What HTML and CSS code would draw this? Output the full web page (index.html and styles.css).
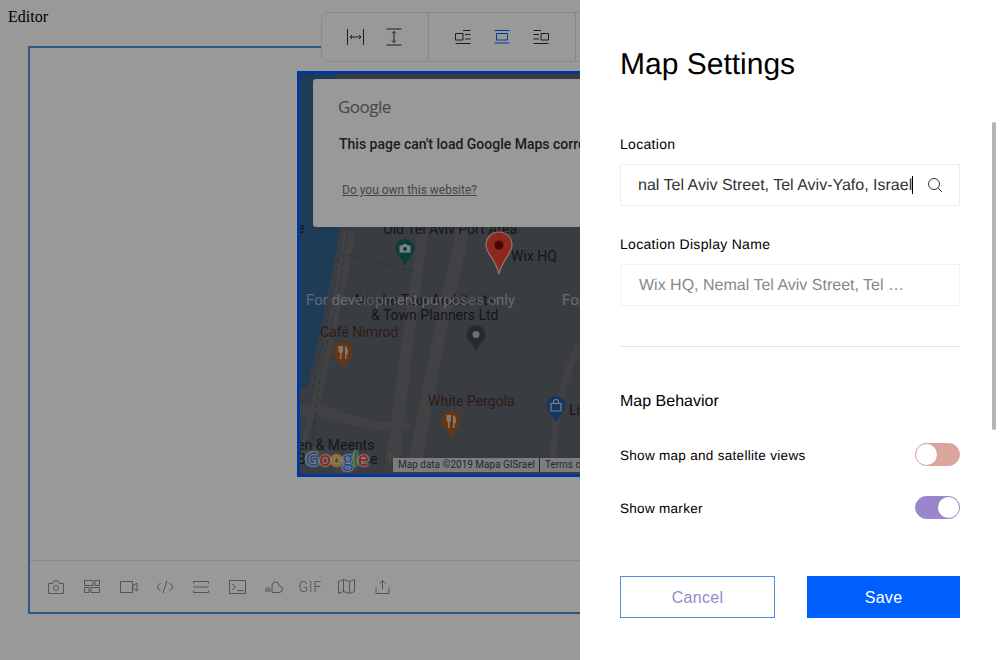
FILE: index.html
```html
<!DOCTYPE html>
<html lang="en">

<head>
    <meta charset="UTF-8">
    <title>Map Settings</title>
    <link rel="stylesheet" href="styles.css">
</head>

<body>
    <div>Editor</div>

    <div class="frame">
        <div class="canvas">
            <div class="map">
                <svg class="map-bg" width="600" height="400" viewBox="0 0 600 400">
                    <path class="sea" d="M0 0H36L40 156 26 230 8 312 0 316Z" />
                    <path class="road" d="M44 156 34 220 14 320 0 372V386L22 320 44 220 56 156Z" />
                    <path class="road" d="M118 156 100 280 86 386H100L112 280 128 156Z" />
                    <path class="road" d="M156 156 134 260 108 386H122L146 260 170 156Z" />
                    <path class="road" d="M0 332Q22 326 40 338L78 348H110V356H76L36 348Q20 340 0 342Z" />
                    <path class="road" d="M0 380Q22 362 40 384L44 400H36Q24 372 0 392Z" />
                    <path class="road" d="M276 270Q252 316 250 386H256Q258 318 282 276Z" />
                    <path class="path" d="M48 156 38 220 20 300 12 372" />
                    <path class="path" d="M40 178 116 198" />
                    <path class="arrow" d="M90 392V380M86 384l4-5 4 5" />
                </svg>

                <span class="label bit-1">e</span>
                <span class="label bit-2">Old Tel Aviv Port Area</span>
                <span class="label wix">Wix HQ</span>
                <span class="label planners-1">Moshe Tzur Architects</span>
                <span class="label planners-2">&amp; Town Planners Ltd</span>
                <span class="label brown nimrod">Café Nimrod</span>
                <span class="label brown pergola">White Pergola</span>
                <span class="label meents-1">en &amp; Meents</span>
                <span class="label meents-2">B e</span>
                <span class="label lig">Lig</span>
                <span class="watermark dev-1">For development purposes only</span>
                <span class="watermark dev-2">For development purposes only</span>

                <svg class="pin pin-camera" width="20" height="27" viewBox="0 0 20 27">
                    <path d="M10 0a9.500 9.500 0 0 1 9.500 9.500c0 6-6.500 9-9.500 17.500C7 18.500.5 15.500.5 9.500A9.500 9.500 0 0 1 10 0Z" fill="#12665f" />
                    <path d="M4.500 6.500h3l1-1.500h3l1 1.500h3v7h-11Z" fill="#d8d8d8" />
                    <circle cx="10" cy="10" r="2" fill="#12665f" />
                </svg>
                <svg class="pin pin-grey" width="20" height="27" viewBox="0 0 20 27">
                    <path d="M10 0a9.500 9.500 0 0 1 9.500 9.500c0 6-6.500 9-9.500 17.500C7 18.500.5 15.500.5 9.500A9.500 9.500 0 0 1 10 0Z" fill="#3e4a52" />
                    <circle cx="10" cy="9.500" r="3.500" fill="#b8bcc0" />
                </svg>
                <svg class="pin pin-food-1" width="20" height="27" viewBox="0 0 20 27">
                    <path d="M10 0a9.500 9.500 0 0 1 9.500 9.500c0 6-6.500 9-9.500 17.500C7 18.500.5 15.500.5 9.500A9.500 9.500 0 0 1 10 0Z" fill="#b05a20" />
                    <path d="M5.500 4v5q0 1.500 1.500 2v6h1.500v-6q1.500-.5 1.500-2V4M12 17V4q3 1 3 6v2h-1.500v5Z" fill="#dccabc" />
                </svg>
                <svg class="pin pin-food-2" width="20" height="27" viewBox="0 0 20 27">
                    <path d="M10 0a9.500 9.500 0 0 1 9.500 9.500c0 6-6.500 9-9.500 17.500C7 18.500.5 15.500.5 9.500A9.500 9.500 0 0 1 10 0Z" fill="#b05a20" />
                    <path d="M5.500 4v5q0 1.500 1.500 2v6h1.500v-6q1.500-.5 1.500-2V4M12 17V4q3 1 3 6v2h-1.500v5Z" fill="#dccabc" />
                </svg>
                <svg class="pin pin-shop" width="20" height="27" viewBox="0 0 20 27">
                    <path d="M10 0a9.500 9.500 0 0 1 9.500 9.500c0 6-6.500 9-9.500 17.500C7 18.500.5 15.500.5 9.500A9.500 9.500 0 0 1 10 0Z" fill="#2459a8" />
                    <path d="M5 7.500h10V15H5ZM7.500 7.500V6a2.500 2.500 0 0 1 5 0v1.500" fill="none" stroke="#d8d8d8" stroke-width="1.200" />
                </svg>

                <svg class="marker" width="28" height="44" viewBox="0 0 28 44">
                    <path d="M14 1C6.500 1 1 6.800 1 14c0 9 9.500 13.500 13 29 3.500-15.500 13-20 13-29C27 6.800 21.500 1 14 1Z" fill="#ea4335" stroke="#f2c4bc" stroke-width="1.200" />
                    <circle cx="14" cy="14" r="4.500" fill="#7a0c08" />
                </svg>

                <span class="map-logo"><i class="c-blue">G</i><i class="c-red">o</i><i class="c-yellow">o</i><i class="c-blue">g</i><i class="c-green">l</i><i class="c-red">e</i></span>

                <div class="attribution">
                    <span>Map data ©2019 Mapa GISrael</span>
                    <span class="terms">Terms of Use</span>
                </div>

                <div class="map-error">
                    <div class="error-logo">Google</div>
                    <p class="error-title">This page can't load Google Maps correctly.</p>
                    <a class="error-link">Do you own this website?</a>
                </div>
            </div>
        </div>

        <div class="bottom-bar">
            <span class="bar-item camera">
                <svg width="16" height="14" viewBox="0 0 16 14"><path d="M.5 3.500h4l1-2.500h5l1 2.500h4v10H.5Z" /><circle cx="8" cy="8" r="2.500" /></svg>
            </span>
            <span class="bar-item">
                <svg width="16" height="13" viewBox="0 0 16 13"><path d="M.5.500h8.500v5H.5ZM11 .5h4.500v5H11ZM.5 7.500H5v5H.5ZM7 7.500h8.500v5H7Z" /></svg>
            </span>
            <span class="bar-item">
                <svg width="18" height="12" viewBox="0 0 18 12"><path d="M.5.500h12v11H.5ZM12.500 5l4.500-3v8l-4.500-3" /></svg>
            </span>
            <span class="bar-item">
                <svg width="18" height="14" viewBox="0 0 18 14"><path d="M4.500 3 1 7l3.500 4M13.500 3 17 7l-3.500 4M11 1 7 13" /></svg>
            </span>
            <span class="bar-item">
                <svg width="16" height="12" viewBox="0 0 16 12"><path d="M.5 2.500V.5h15v2M.5 9.500v2h15v-2M.5 6h15" /></svg>
            </span>
            <span class="bar-item">
                <svg width="17" height="14" viewBox="0 0 17 14"><path d="M.5.500h16v13H.5ZM3 4l3.500 3L3 10M8 10.500h6.500" /></svg>
            </span>
            <span class="bar-item">
                <svg width="18" height="12" viewBox="0 0 18 12"><path d="M1 7v4M3 5.500V11M5 7v4M7 11V4Q8 1 10.500 1 14 1 14.500 5q3 .3 3 3T14.500 11.500H7" /></svg>
            </span>
            <span class="bar-item gif">GIF</span>
            <span class="bar-item">
                <svg width="17" height="15" viewBox="0 0 17 15"><path d="M.5 2.500 5.500.5l6 2 5-2v12l-5 2-6-2-5 2ZM5.500.5v12M11.500 2.500v12" /></svg>
            </span>
            <span class="bar-item">
                <svg width="15" height="14" viewBox="0 0 15 14"><path d="M7.500 9.500V1M4.500 3.500l3-3 3 3M1 7.500v6h13v-6" /></svg>
            </span>
        </div>

        <div class="toolbar">
            <div class="tool-group">
                <span class="tool">
                    <svg width="20" height="18" viewBox="0 0 20 18"><path d="M2.500 1v16M18.500 1v16M5 9h11M7 7 5 9l2 2M14 7l2 2-2 2" /></svg>
                </span>
                <span class="tool">
                    <svg width="16" height="18" viewBox="0 0 16 18"><path d="M.5 1h15M.5 17h15M8 3.500v11M6 5.500l2-2 2 2M6 12.500l2 2 2-2" /></svg>
                </span>
            </div>
            <div class="tool-group group-wrap">
                <span class="tool">
                    <svg width="16" height="14" viewBox="0 0 16 14"><path d="M.5 3.500h7.500v6.500H.5ZM8 .5h7.500M10 4.500h5.500M10 9h5.500M.5 13.500h15" /></svg>
                </span>
                <span class="tool tool-active">
                    <svg width="16" height="14" viewBox="0 0 16 14"><path d="M.5.5h15M.5 13h15M2.500 3.500h11V10h-11Z" /></svg>
                </span>
                <span class="tool">
                    <svg width="16" height="14" viewBox="0 0 16 14"><path d="M8 3.500h7.500v6.500H8ZM.5.5H8M.5 4.500H6M.5 9H6M.5 13.500h15" /></svg>
                </span>
            </div>
            <div class="tool-group group-rest"></div>
        </div>
    </div>

    <div class="overlay"></div>

    <aside class="panel">
        <h1>Map Settings</h1>

        <label class="field-label">Location</label>
        <div class="field">
            <span class="field-text">nal Tel Aviv Street, Tel Aviv-Yafo, Israel</span>
            <span class="caret"></span>
            <svg class="search" width="16" height="16" viewBox="0 0 16 16"><circle cx="7" cy="7" r="5.500" /><path d="m11 11 4 4" /></svg>
        </div>

        <label class="field-label second">Location Display Name</label>
        <div class="field field-name">
            <span class="field-text">Wix HQ, Nemal Tel Aviv Street, Tel …</span>
        </div>

        <hr>

        <h2>Map Behavior</h2>

        <div class="toggle-row">
            <span class="toggle-text">Show map and satellite views</span>
            <span class="toggle toggle-off"></span>
        </div>
        <div class="toggle-row">
            <span class="toggle-text">Show marker</span>
            <span class="toggle toggle-on"></span>
        </div>

        <div class="actions">
            <button class="btn-cancel">Cancel</button>
            <button class="btn-save">Save</button>
        </div>

        <div class="scroll-thumb"></div>
    </aside>
</body>

</html>
```

FILE: styles.css
```css
html,
body {
    height: 100%;
    overflow: hidden;
}

body {
    background-color: #fff;
}

.frame {
    position: relative;
    display: flex;
    flex-direction: column;
    width: 900px;
    height: 568px;
    margin: 20px 0 0 20px;
    box-sizing: border-box;
    border: 2px solid #4a94d8;
}

.canvas {
    flex: 1;
    padding: 23px 0 0 267px;
}

/* map */

.map {
    position: relative;
    width: 600px;
    height: 400px;
    border: 3px solid #0060ff;
    overflow: hidden;
    background-color: #60666f;
    font-family: Roboto, "Liberation Sans", sans-serif;
}

.map-bg {
    display: block;
}

.sea {
    fill: #32648e;
}

.road {
    fill: #6e6e72;
}

.path {
    fill: none;
    stroke: #3f5a5c;
    stroke-width: 1;
    stroke-dasharray: 5 3;
}

.arrow {
    fill: none;
    stroke: #7c7c7c;
    stroke-width: 1.500;
}

.label {
    position: absolute;
    font-size: 14px;
    line-height: 16px;
    white-space: nowrap;
    color: #23262c;
}

.brown {
    color: #4a3028;
}

.bit-1 { left: -3px; top: 146px; }
.bit-2 { left: 83px; top: 147px; }
.wix { left: 211px; top: 174px; }
.planners-1 { left: 55px; top: 218px; }
.planners-2 { left: 71px; top: 233px; }
.nimrod { left: 20px; top: 250px; }
.pergola { left: 128px; top: 319px; }
.meents-1 { left: -3px; top: 363px; }
.meents-2 { left: -3px; top: 377px; word-spacing: 61px; }
.lig { left: 269px; top: 328px; }

.watermark {
    position: absolute;
    top: 217px;
    font-size: 15px;
    line-height: 18px;
    white-space: nowrap;
    color: rgba(255, 255, 255, 0.5);
}

.dev-1 { left: 6px; }
.dev-2 { left: 262px; }

.pin {
    position: absolute;
}

.pin-camera { left: 95px; top: 165px; }
.pin-grey { left: 166px; top: 251px; }
.pin-food-1 { left: 33px; top: 268px; }
.pin-food-2 { left: 141px; top: 337px; }
.pin-shop { left: 246px; top: 322px; }

.marker {
    position: absolute;
    left: 185px;
    top: 157px;
}

.map-logo {
    position: absolute;
    left: 5px;
    top: 372px;
    font-family: "Open Sans", "Liberation Sans", sans-serif;
    font-size: 20px;
    line-height: 26px;
    font-weight: 600;
    letter-spacing: -0.6px;
    text-shadow: 0 0 2px #fff, 0 0 2px #fff, 0 0 2px #fff;
}

.map-logo i {
    font-style: normal;
}

.c-blue { color: #4285f4; }
.c-red { color: #ea4335; }
.c-yellow { color: #fbbc05; }
.c-green { color: #34a853; }

.attribution {
    position: absolute;
    left: 93px;
    bottom: 2px;
    display: flex;
    width: 300px;
    height: 14px;
    padding-left: 5px;
    box-sizing: border-box;
    background-color: rgba(245, 245, 245, 0.75);
    font-size: 10px;
    line-height: 14px;
    color: #444;
    white-space: nowrap;
}

.terms {
    margin-left: 4px;
    padding-left: 5px;
    border-left: 1px solid #444;
}

.map-error {
    position: absolute;
    left: 13px;
    top: 5px;
    width: 400px;
    height: 148px;
    box-sizing: border-box;
    padding: 17px 26px;
    background-color: #fff;
    border-radius: 3px;
    color: #333;
    white-space: nowrap;
}

.error-logo {
    font-family: "Open Sans", "Liberation Sans", sans-serif;
    font-size: 17px;
    line-height: 22px;
    letter-spacing: -0.5px;
    margin-left: -1px;
    color: #757575;
}

.error-title {
    margin: 16px 0 0;
    font-size: 14px;
    line-height: 20px;
    font-weight: 500;
}

.error-link {
    display: inline-block;
    margin: 29px 0 0 3px;
    font-size: 12px;
    line-height: 15px;
    color: #757575;
    text-decoration: underline;
}

/* bottom bar of the editor */

.bottom-bar {
    display: grid;
    grid-auto-flow: column;
    grid-auto-columns: 36.3px;
    justify-content: start;
    align-items: center;
    height: 52px;
    box-sizing: border-box;
    padding: 0 0 0 8px;
    border-top: 1px solid #e3e3e3;
}

.bar-item {
    display: flex;
    justify-content: center;
}

.bar-item svg,
.tool svg,
.search {
    fill: none;
    stroke: #8c8c8c;
    stroke-width: 1;
}

.gif {
    font-family: Roboto, "Liberation Sans", sans-serif;
    font-size: 14px;
    font-weight: 300;
    letter-spacing: 0.8px;
    color: #8c8c8c;
}

/* toolbar over the frame */

.toolbar {
    position: absolute;
    left: 291px;
    top: -36px;
    display: flex;
    height: 50px;
    box-sizing: border-box;
    background-color: #fff;
    border: 1px solid #e3e3e3;
    border-radius: 8px;
}

.tool-group {
    display: flex;
    align-items: center;
    padding: 0 15px 0 13px;
    border-right: 1px solid #e3e3e3;
}

.group-wrap {
    padding: 0 15px 0 14px;
}

.group-rest {
    width: 100px;
    padding: 0;
    border-right: 0;
}

.tool {
    display: flex;
    justify-content: center;
    width: 39px;
}

.tool svg {
    stroke: #333;
}

.tool-active svg {
    stroke: #0060ff;
}

/* overlay and settings panel */

.overlay {
    position: absolute;
    top: 0;
    right: 0;
    bottom: 0;
    left: 0;
    background-color: rgba(0, 0, 0, 0.4);
}

.panel {
    position: absolute;
    top: 0;
    right: 0;
    bottom: 0;
    width: 420px;
    padding: 0 40px;
    box-sizing: border-box;
    background-color: #fff;
    font-family: "Liberation Sans", Arial, sans-serif;
    color: #000;
    text-rendering: geometricPrecision;
}

h1 {
    margin: 46px 0 0;
    font-size: 30px;
    line-height: 38px;
    font-weight: 400;
}

.field-label {
    display: block;
    margin-top: 52px;
    font-size: 14px;
    line-height: 17px;
    letter-spacing: 0.3px;
}

.field-label.second {
    margin-top: 30px;
}

.field {
    display: flex;
    align-items: center;
    height: 42px;
    margin-top: 11px;
    padding: 0 17px;
    box-sizing: border-box;
    border: 1px solid #eee;
    font-size: 16px;
    color: #333;
}

.field-text {
    padding-top: 1px;
    white-space: nowrap;
}

.caret {
    width: 1px;
    height: 18px;
    background-color: #000;
}

.search {
    margin-left: auto;
    stroke: #333;
    transform: translateX(1px);
}

.field-name {
    padding-left: 18px;
    border-color: #f3f3f3;
    color: #888;
}

hr {
    height: 1px;
    margin: 40px 0 0;
    border: 0;
    background-color: #f6dcd9;
}

h2 {
    margin: 45px 0 0;
    font-size: 16px;
    line-height: 20px;
    font-weight: 400;
}

.toggle-row {
    display: flex;
    justify-content: space-between;
    align-items: center;
    height: 23px;
    margin-top: 30px;
    font-size: 13.500px;
    letter-spacing: 0.3px;
}

h2 + .toggle-row {
    margin-top: 31px;
}

.toggle-text {
    padding-top: 2px;
}

.toggle {
    position: relative;
    width: 45px;
    height: 23px;
    box-sizing: border-box;
    border-radius: 12px;
}

.toggle::after {
    content: "";
    position: absolute;
    top: 0;
    width: 21px;
    height: 21px;
    border-radius: 50%;
    background-color: #fff;
}

.toggle-off {
    background-color: #d9a59c;
    border: 1px solid #d9a59c;
}

.toggle-off::after {
    left: 0;
}

.toggle-on {
    background-color: #9b86cc;
    border: 1px solid #9b86cc;
}

.toggle-on::after {
    right: 0;
}

.actions {
    display: flex;
    justify-content: space-between;
    margin-top: 57px;
}

button {
    height: 42px;
    padding: 1px 0 0;
    font-family: inherit;
    font-size: 16px;
    letter-spacing: 0.3px;
    border-radius: 0;
}

.btn-cancel {
    width: 155px;
    background-color: #fff;
    border: 1px solid #4a90e2;
    color: #9b86cc;
}

.btn-save {
    width: 153px;
    background-color: #0060ff;
    border: none;
    color: #fff;
}

.scroll-thumb {
    position: absolute;
    top: 122px;
    right: 4px;
    width: 4px;
    height: 308px;
    border-radius: 2px;
    background-color: #b3b3b3;
}
```
